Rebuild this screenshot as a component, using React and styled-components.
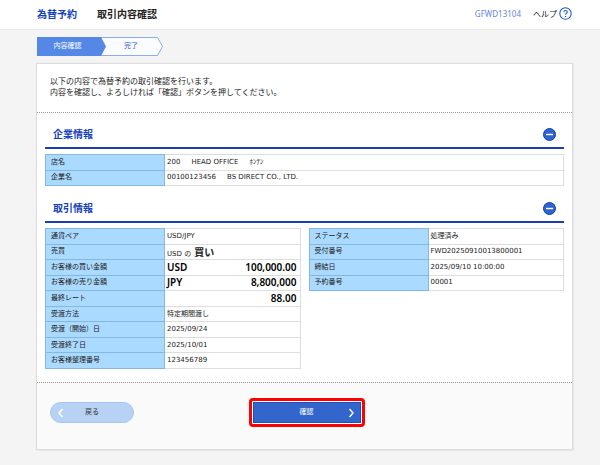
import React, { useState } from 'react'
import styled, { createGlobalStyle } from 'styled-components';

const GlobalStyle = createGlobalStyle`
* {
box-sizing: border-box;
}

body {
margin: 0;
background: #f4f4f4;
color: #222222;
font-family: "DejaVu Sans", "Noto Sans CJK JP", sans-serif;
font-size: 7px;
line-height: 11px;
}

button {
font-family: inherit;
cursor: pointer;
}
`;

const Header = styled.header`
display: flex;
align-items: center;
height: 30px;
padding: 0 28px 2px 37px;
background: #ffffff;
border-bottom: 1px solid #e9e9e9;
font-family: "Noto Sans", "Noto Sans CJK JP", sans-serif;
`;

const Category = styled.span`
margin-right: 20px;
color: #1340c0;
font-family: "Noto Sans CJK JP", sans-serif;
font-size: 10px;
font-weight: 700;
`;

const PageTitle = styled.h1`
margin: 0;
font-family: "Noto Sans CJK JP", sans-serif;
font-size: 10px;
font-weight: 700;
`;

const ScreenCode = styled.span`
margin-left: auto;
color: #6387de;
font-size: 8px;
`;

const HelpLink = styled.a`
display: flex;
align-items: center;
gap: 2px;
margin-left: 12px;
color: #111111;
font-size: 8px;
text-decoration: none;
`;

const Main = styled.main`
padding: 7px 28px 16px 37px;
`;

const Steps = styled.ol`
display: flex;
margin: 0 0 8px;
padding: 0;
list-style: none;
`;

const Step = styled.li`
display: grid;
width: ${props => props.$current ? '69px' : '62px'};
height: 19px;
margin-right: ${props => props.$current ? '-5px' : '0'};
z-index: ${props => props.$current ? 1 : 0};
color: ${props => props.$current ? '#ffffff' : '#2a5bd0'};
`;

const StepShape = styled.svg`
grid-area: 1 / 1;
width: 100%;
height: 100%;
`;

const StepLabel = styled.span`
grid-area: 1 / 1;
place-self: center;
padding-right: ${props => props.$current ? '8px' : '2px'};
z-index: 1;
`;

const Card = styled.div`
background: #ffffff;
box-shadow: 0 0 1px 1px #dddddd, 1px 1px 1px #aaaaaa;
`;

const Intro = styled.p`
margin: 0;
padding: 12px 13px 14px;
border-bottom: 1px dotted #999999;
font-size: 8px;
`;

const Details = styled.div`
display: flex;
flex-direction: column;
gap: 1px;
padding: 0 8px 13px;
`;

const SectionHead = styled.div`
display: flex;
align-items: center;
justify-content: space-between;
height: 36px;
margin-bottom: 5px;
padding: 8px 8px 0;
border-bottom: 2px solid #1a3db5;
`;

const SectionTitle = styled.h2`
margin: 0;
padding-bottom: 2px;
color: #1542bd;
font-family: "Noto Sans CJK JP", sans-serif;
font-size: 10px;
font-weight: 700;
`;

const Toggle = styled.button`
display: flex;
padding: 0;
border: 0;
background: none;
`;

const Tables = styled.div`
display: grid;
grid-template-columns: ${props => props.$split ? '1fr 1fr' : '1fr'};
align-items: start;
gap: 8px;
`;

const InfoTable = styled.table`
width: 100%;
height: ${props => props.$height}px;
border-collapse: collapse;
table-layout: fixed;
`;

const Label = styled.th`
width: 119px;
padding: 0 5px;
border: 1px solid #84b8de;
background: #aadaff;
font-weight: 400;
text-align: left;
`;

const Value = styled.td`
padding: 0 3px 0 2px;
border: 1px solid #dddddd;
white-space: nowrap;
`;

const Parts = styled.div`
display: flex;
gap: 11px;
`;

const Amount = styled.div`
display: flex;
justify-content: space-between;
color: #000000;
font-family: "Noto Sans", sans-serif;
font-size: 10px;
font-weight: 600;
`;

const Deal = styled.div`
display: flex;
align-items: baseline;
gap: 3px;
height: 11px;
`;

const Strong = styled.strong`
font-family: "Noto Sans CJK JP", sans-serif;
font-size: 10px;
`;

const Actions = styled.div`
display: grid;
grid-template-columns: 1fr auto 1fr;
align-items: center;
justify-items: start;
padding: 15px 8px 22px 13px;
border-top: 1px dotted #999999;
background: #fafafa;
`;

const ActionButton = styled.button`
display: flex;
align-items: center;
justify-content: space-between;
height: 21px;
font-size: 7px;
line-height: 11px;
`;

const BackButton = styled(ActionButton)`
width: 84px;
padding: 0 6px;
border: 1px solid #a6c6ee;
border-radius: 11px;
background: #b8d2f5;
color: #333333;
`;

const ConfirmButton = styled(ActionButton)`
width: 108px;
padding: 0 5px 0 4px;
border: 1px solid #1f50b8;
background: #3366cc;
color: #ffffff;
`;

const Highlight = styled.div`
padding: 1px;
border: 3px solid #ff0000;
border-radius: 4px;
background: #ffffff;
`;

const Spacer = styled.span`
width: 8px;
`;

const MinusIcon = () => (
    <svg width="13" height="13" viewBox="0 0 13 13" aria-hidden="true">
        <circle cx="6.5" cy="6.5" r="6" fill="#2f64cc" stroke="#0c3fb4" />
        <path d="M3 6.5h7" stroke="#ffffff" strokeWidth="1.4" />
    </svg>
)

const PlusIcon = () => (
    <svg width="13" height="13" viewBox="0 0 13 13" aria-hidden="true">
        <circle cx="6.5" cy="6.5" r="6" fill="#2f64cc" stroke="#0c3fb4" />
        <path d="M3 6.5h7M6.5 3v7" stroke="#ffffff" strokeWidth="1.4" />
    </svg>
)

const HelpIcon = () => (
    <svg width="13" height="13" viewBox="0 0 13 13" fill="none" stroke="#2459c9" aria-hidden="true">
        <circle cx="6.5" cy="6.5" r="5.7" strokeWidth="1.1" />
        <path d="M4.9 5.2c0-2.2 3.4-2.1 3.4-.2 0 1.1-1.7 1.4-1.7 2.7M6.6 8.9v1.1" strokeWidth="1.1" />
    </svg>
)

const Chevron = ({ left }) => (
    <svg width="8" height="10" viewBox="0 0 8 10" fill="none" stroke="#ffffff" strokeWidth="1.4" aria-hidden="true">
        <path d={left ? 'M5.5 1L2 5l3.5 4' : 'M2.5 1L6 5 2.5 9'} />
    </svg>
)

const Section = ({ title, split, children }) => {
    const [open, setOpen] = useState(true)

    return(
        <section>
            <SectionHead>
                <SectionTitle>{title}</SectionTitle>
                <Toggle type="button" aria-label={title} aria-expanded={open} onClick={() => setOpen(!open)}>
                    {open ? <MinusIcon /> : <PlusIcon />}
                </Toggle>
            </SectionHead>
            {open && <Tables $split={split}>{children}</Tables>}
        </section>
    )
}

const Info = ({ rows, height }) => (
    <InfoTable $height={height}>
        <tbody>
            {rows.map(([label, value]) => (
                <tr key={label}>
                    <Label scope="row">{label}</Label>
                    <Value>{value}</Value>
                </tr>
            ))}
        </tbody>
    </InfoTable>
)

const company = [
    ['店名', <Parts><span>200</span><span>HEAD OFFICE</span><span>ﾎﾝﾃﾝ</span></Parts>],
    ['企業名', <Parts><span>00100123456</span><span>BS DIRECT CO., LTD.</span></Parts>],
]

const deal = [
    ['通貨ペア', 'USD/JPY'],
    ['売買', <Deal><span>USD の</span><Strong>買い</Strong></Deal>],
    ['お客様の買い金額', <Amount><span>USD</span><span>100,000.00</span></Amount>],
    ['お客様の売り金額', <Amount><span>JPY</span><span>8,800,000</span></Amount>],
    ['最終レート', <Amount><span /><span>88.00</span></Amount>],
    ['受渡方法', '特定期間渡し'],
    ['受渡（開始）日', '2025/09/24'],
    ['受渡終了日', '2025/10/01'],
    ['お客様整理番号', '123456789'],
]

const status = [
    ['ステータス', '処理済み'],
    ['受付番号', 'FWD20250910013800001'],
    ['締結日', '2025/09/10 10:00:00'],
    ['予約番号', '00001'],
]

const App = () => {

    return(
        <>
            <GlobalStyle />
            <Header>
                <Category>為替予約</Category>
                <PageTitle>取引内容確認</PageTitle>
                <ScreenCode>GFWD13104</ScreenCode>
                <HelpLink href="#help">ヘルプ<HelpIcon /></HelpLink>
            </Header>
            <Main>
                <Steps>
                    <Step $current aria-current="step">
                        <StepShape viewBox="0 0 69 19" aria-hidden="true">
                            <path d="M0 0h64l5 9.5-5 9.5H0z" fill="#5588e6" />
                        </StepShape>
                        <StepLabel $current>内容確認</StepLabel>
                    </Step>
                    <Step>
                        <StepShape viewBox="0 0 62 19" aria-hidden="true">
                            <path d="M0 .5h56.5l5 9-5 9H0" fill="#fafcff" stroke="#8aaeea" />
                        </StepShape>
                        <StepLabel>完了</StepLabel>
                    </Step>
                </Steps>
                <Card>
                    <Intro>
                        以下の内容で為替予約の取引確認を行います。<br />
                        内容を確認し、よろしければ「確認」ボタンを押してください。
                    </Intro>
                    <Details>
                        <Section title="企業情報">
                            <Info rows={company} height={32} />
                        </Section>
                        <Section title="取引情報" split>
                            <Info rows={deal} height={141} />
                            <Info rows={status} height={63} />
                        </Section>
                    </Details>
                    <Actions>
                        <BackButton type="button"><Chevron left />戻る<Spacer /></BackButton>
                        <Highlight>
                            <ConfirmButton type="button"><Spacer />確認<Chevron /></ConfirmButton>
                        </Highlight>
                    </Actions>
                </Card>
            </Main>
        </>
    )
}

export default App;
